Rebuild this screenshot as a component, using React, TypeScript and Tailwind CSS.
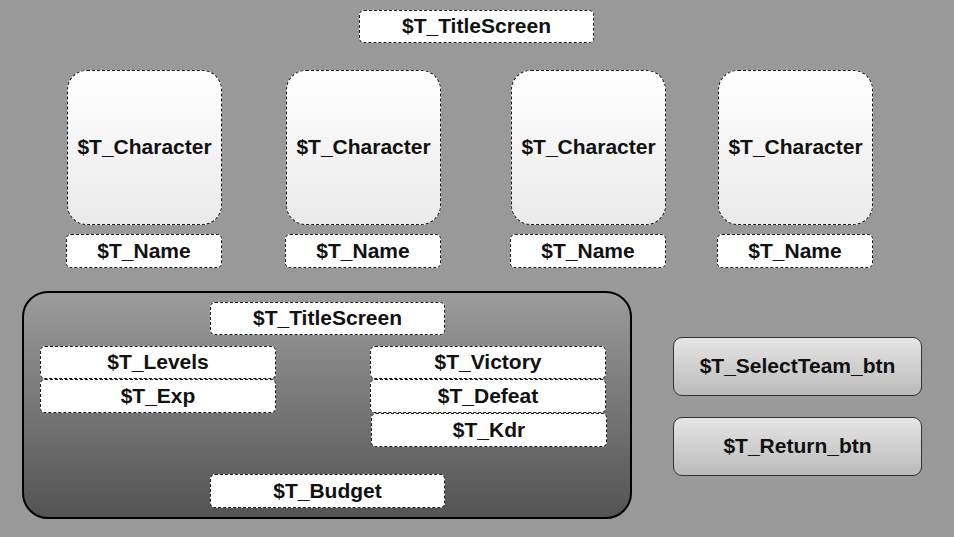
import React from "react";

const box =
  "flex items-center justify-center bg-white border border-dashed border-[#1a1a1a] rounded-[5px] text-[21px] font-bold text-[#111] leading-none pb-[2px]";

function Col({ ml }: { ml: string }) {
  return (
    <div className={`flex flex-col ${ml}`}>
      <div className="w-[155px] h-[155px] mt-[1px] ml-[1px] rounded-[20px] border border-dashed border-[#1a1a1a] bg-gradient-to-b from-white to-[#eaeaea] flex items-center justify-center text-[21px] font-bold text-[#111] leading-none pb-[2px]">
        $T_Character
      </div>
      <div className={`${box} w-[156px] h-[34px] mt-[9px]`}>$T_Name</div>
    </div>
  );
}

export default function App() {
  return (
    <div
      className="w-[954px] h-[537px] bg-[#999999] flex flex-col overflow-hidden"
      style={{ fontFamily: '"Liberation Sans", Arial, sans-serif' }}
    >
      <div className={`${box} w-[235px] h-[33px] mt-[10px] ml-[359px]`}>$T_TitleScreen</div>
      <div className="flex mt-[26px]">
        <Col ml="ml-[66px]" />
        <Col ml="ml-[63px]" />
        <Col ml="ml-[69px]" />
        <Col ml="ml-[51px]" />
      </div>
      <div className="flex mt-[23px]">
        <div className="ml-[22px] w-[610px] h-[228px] rounded-[26px] border-2 border-black bg-gradient-to-b from-[#9c9c9c] to-[#545454] flex flex-col">
          <div className={`${box} w-[235px] h-[33px] mt-[9px] ml-[186px]`}>$T_TitleScreen</div>
          <div className="flex mt-[11px]">
            <div className="flex flex-col ml-[16px]">
              <div className={`${box} w-[236px] h-[33px]`}>$T_Levels</div>
              <div className={`${box} w-[236px] h-[34px]`}>$T_Exp</div>
            </div>
            <div className="flex flex-col ml-[94px]">
              <div className={`${box} w-[236px] h-[33px]`}>$T_Victory</div>
              <div className={`${box} w-[236px] h-[34px]`}>$T_Defeat</div>
              <div className={`${box} w-[236px] h-[34px] ml-[1px]`}>$T_Kdr</div>
            </div>
          </div>
          <div className={`${box} w-[235px] h-[34px] mt-[27px] ml-[186px]`}>$T_Budget</div>
        </div>
        <div className="flex flex-col ml-[41px] mt-[46px]">
          <div className="w-[249px] h-[59px] rounded-[9px] border border-[#333] bg-gradient-to-b from-[#e6e6e6] to-[#bababa] flex items-center justify-center text-[21px] font-bold text-[#111] leading-none pb-[2px]">
            $T_SelectTeam_btn
          </div>
          <div className="w-[249px] h-[59px] mt-[21px] rounded-[9px] border border-[#333] bg-gradient-to-b from-[#e6e6e6] to-[#bababa] flex items-center justify-center text-[21px] font-bold text-[#111] leading-none pb-[2px]">
            $T_Return_btn
          </div>
        </div>
      </div>
    </div>
  );
}
